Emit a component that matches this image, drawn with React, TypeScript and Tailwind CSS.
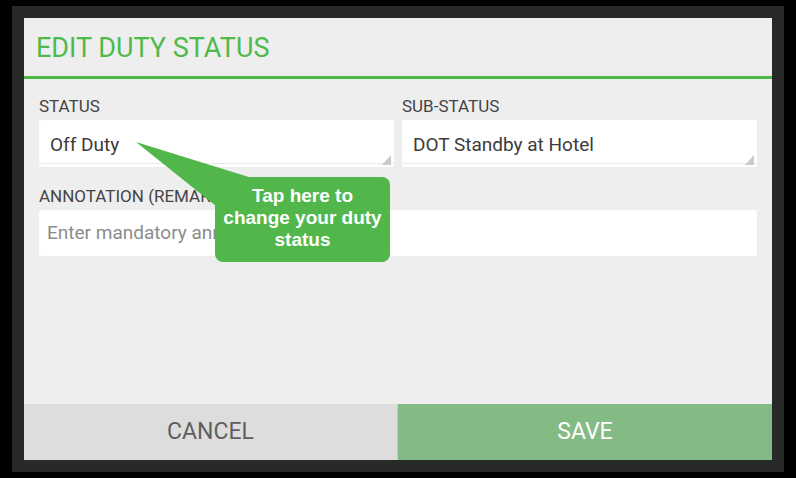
import React from 'react';

// small grey corner mark that Android spinners draw at bottom right
const SpinnerCorner: React.FC = () => (
  <svg className="absolute bottom-[2px] right-[3px]" width="9" height="10" viewBox="0 0 9 10">
    <polygon points="9,0 9,10 0,10" fill="#c9cbcb" />
  </svg>
);

type SelectProps = { value: string };

const SelectField: React.FC<SelectProps> = ({ value }) => (
  <div className="relative h-[47px] rounded-[2px] bg-white pb-[3px]">
    <div className="h-full border-b border-[#e4ecec] pl-[11px] pt-[14px] text-[19px] leading-[22px] text-[#3b3b3b]">
      {value}
    </div>
    <SpinnerCorner />
  </div>
);

const Label: React.FC<{ children: React.ReactNode }> = ({ children }) => (
  <div className="mb-[4px] text-[17px] leading-[20px] text-[#444444]">{children}</div>
);

const Tooltip: React.FC = () => (
  <>
    <svg className="absolute left-0 top-0" width="796" height="478" viewBox="0 0 796 478">
      <polygon points="136,142 252,178 216,206" fill="#51b74b" />
    </svg>
    <div className="absolute left-[215px] top-[177px] w-[175px] h-[85px] rounded-[8px] bg-[#51b74b] pt-[8px] text-center font-['Liberation_Sans',Arial,sans-serif] text-[19px] font-bold leading-[22px] text-white">
      Tap here to
      <br />
      change your duty
      <br />
      status
    </div>
  </>
);

const App: React.FC = () => {
  return (
    <div className="relative w-[796px] h-[478px] overflow-hidden bg-black pl-[12px] pt-[6px] font-['Roboto',sans-serif]">
      <div className="w-[772px] h-[466px] bg-[#272a27] p-3">
        <div className="flex h-full flex-col bg-[#eeeeee]">
          {/* header */}
          <div className="h-[61px] border-b-[3px] border-[#4cb848] pl-3 pt-[15px] text-[27px] leading-[30px] text-[#4fba4c]">
            EDIT DUTY STATUS
          </div>

          {/* form */}
          <div className="flex-1 px-[15px] pt-[17px]">
            <div className="grid grid-cols-2 gap-x-[8px]">
              <div>
                <Label>STATUS</Label>
                <SelectField value="Off Duty" />
              </div>
              <div>
                <Label>SUB-STATUS</Label>
                <SelectField value="DOT Standby at Hotel" />
              </div>
            </div>

            <div className="mt-[19px]">
              <Label>ANNOTATION (REMARKS)</Label>
              <div className="h-[46px] rounded-[2px] bg-white pl-[8px] pt-[12px] text-[19px] leading-[22px] text-[#8c8c8c]">
                Enter mandatory annotation
              </div>
            </div>
          </div>

          {/* actions */}
          <div className="grid h-[56px] grid-cols-2">
            <div className="flex items-center justify-center border-r border-[#c9c9c9] bg-[#dddddd] text-[23px] text-[#5f5f5f]">
              CANCEL
            </div>
            <div className="flex items-center justify-center bg-[#84bb85] text-[23px] text-white">
              SAVE
            </div>
          </div>
        </div>
      </div>

      <Tooltip />
    </div>
  );
};

export default App;
